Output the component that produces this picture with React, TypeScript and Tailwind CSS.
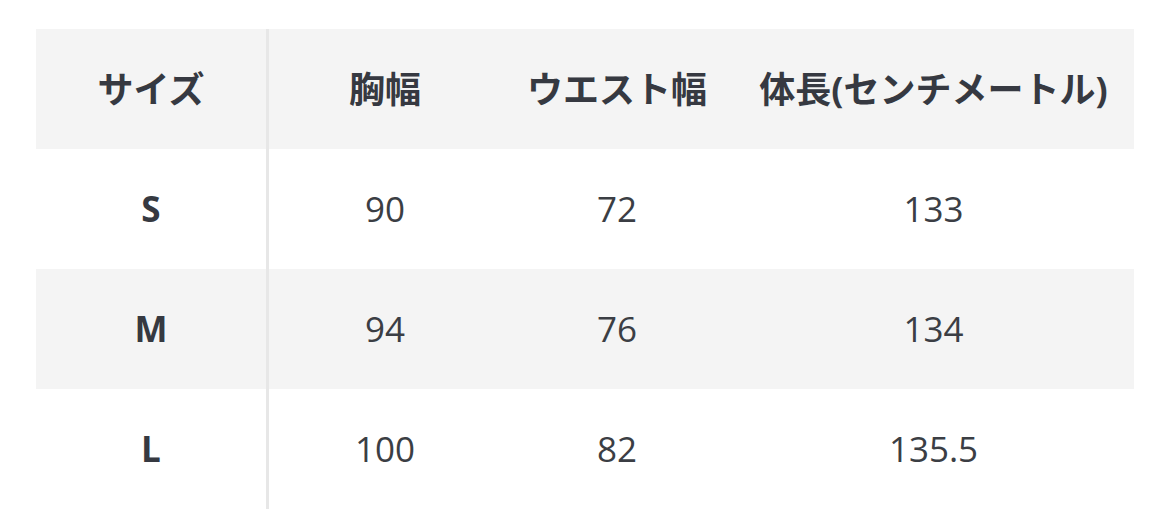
export default function App() {
  const rows = [
    ["S", "90", "72", "133"],
    ["M", "94", "76", "134"],
    ["L", "100", "82", "135.5"],
  ];
  const font = { fontFamily: '"Open Sans", "Noto Sans CJK JP", sans-serif' };
  return (
    <div className="w-[1170px] h-[521px] bg-white pt-[29px] pl-[36px]" style={font}>
      <div className="w-[1098px] flex flex-col">
        <div className="grid grid-cols-[233px_232px_232px_1fr] h-[120px] bg-[#f4f4f4] text-[#363941] font-bold text-[36px]">
          <div className="flex items-center justify-center border-r-[3px] border-[#e7e7e7] pt-[2px]">サイズ</div>
          <div className="flex items-center justify-center pt-[2px]">胸幅</div>
          <div className="flex items-center justify-center pt-[2px]">ウエスト幅</div>
          <div className="flex items-center justify-center pt-[2px]">体長(センチメートル)</div>
        </div>
        {rows.map((r, i) => (
          <div
            key={r[0]}
            className={`grid grid-cols-[233px_232px_232px_1fr] h-[120px] text-[35px] text-[#3b3e44] ${i % 2 === 1 ? "bg-[#f4f4f4]" : "bg-white"}`}
          >
            <div className="flex items-center justify-center border-r-[3px] border-[#e7e7e7] font-bold text-[#363941]">{r[0]}</div>
            <div className="flex items-center justify-center">{r[1]}</div>
            <div className="flex items-center justify-center">{r[2]}</div>
            <div className="flex items-center justify-center">{r[3]}</div>
          </div>
        ))}
      </div>
    </div>
  );
}
